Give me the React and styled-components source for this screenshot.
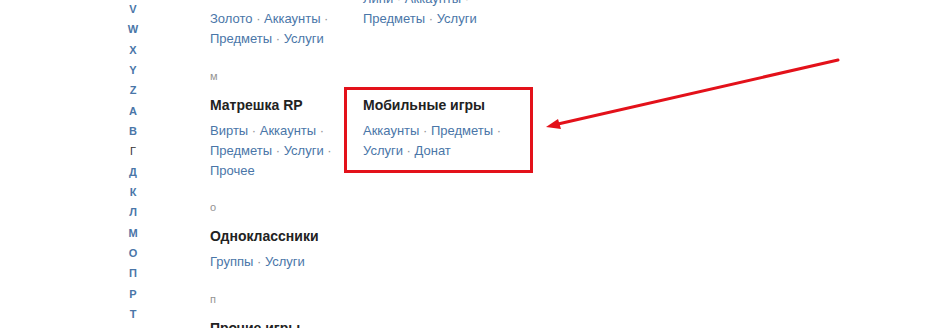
import React from 'react';
import styled, { createGlobalStyle } from 'styled-components';

const GlobalStyle = createGlobalStyle`
    html, body {
        margin: 0;
        padding: 0;
        background: #fff;
        overflow: hidden;
    }
    body {
        font-family: "Liberation Sans", Arial, sans-serif;
        color: #222;
    }
`;

const Page = styled.div`
    position: relative;
    width: 925px;
    height: 328px;
    overflow: hidden;
    display: flex;
    align-items: flex-start;
`;

const Nav = styled.nav`
    width: 24px;
    margin-left: 121px;
    margin-top: -1px;
    display: flex;
    flex-direction: column;
`;

const NavLetter = styled.a`
    display: block;
    text-align: center;
    font-size: 11px;
    line-height: 20.33px;
    font-weight: ${(p) => (p.$active ? 'normal' : 'bold')};
    color: ${(p) => (p.$active ? '#333' : '#4a76a8')};
    text-decoration: none;
`;

const Content = styled.div`
    margin-left: 65px;
    margin-top: -37px;
    display: flex;
    flex-direction: column;
`;

const Section = styled.section`
    padding-bottom: ${(p) => p.$gap}px;
`;

const Letter = styled.div`
    font-size: 11px;
    line-height: 12px;
    color: #939393;
    margin-bottom: 13px;
`;

const Row = styled.div`
    display: grid;
    grid-template-columns: repeat(2, 143px);
    column-gap: 10px;
    align-items: start;
`;

const Card = styled.div`
    position: relative;

    ${(p) =>
        p.$marked &&
        `
        &::after {
            content: '';
            position: absolute;
            top: -8px;
            left: -19px;
            right: -27px;
            bottom: -12px;
            border: 3px solid #e3111a;
            pointer-events: none;
        }
    `}
`;

const Title = styled.div`
    font-size: 14px;
    font-weight: bold;
    line-height: 20px;
    color: #222;
    margin-bottom: 6px;
`;

const Links = styled.div`
    font-size: 13px;
    line-height: 20px;
    color: #939393;
`;

const Link = styled.a`
    color: #4a76a8;
    text-decoration: none;
`;

const Arrow = styled.svg`
    position: absolute;
    top: 0;
    left: 0;
    pointer-events: none;
`;

const navLetters = ['V', 'W', 'X', 'Y', 'Z', 'А', 'В', 'Г', 'Д', 'К', 'Л', 'М', 'О', 'П', 'Р', 'Т'];

const sections = [
    {
        letter: 'л',
        gap: 21,
        cards: [
            { title: 'Lineage 2 Essence Classic', links: ['Золото', 'Аккаунты', 'Предметы', 'Услуги'] },
            { title: 'Legends', links: ['Лини', 'Аккаунты', 'Предметы', 'Услуги'] },
        ],
    },
    {
        letter: 'м',
        gap: 20,
        cards: [
            { title: 'Матрешка RP', links: ['Вирты', 'Аккаунты', 'Предметы', 'Услуги', 'Прочее'] },
            { title: 'Мобильные игры', links: ['Аккаунты', 'Предметы', 'Услуги', 'Донат'], marked: true },
        ],
    },
    {
        letter: 'о',
        gap: 21,
        cards: [{ title: 'Одноклассники', links: ['Группы', 'Услуги'] }],
    },
    {
        letter: 'п',
        gap: 0,
        cards: [{ title: 'Прочие игры', links: ['Аккаунты', 'Предметы'] }],
    },
];

const LinkList = ({ items }) => (
    <Links>
        {items.map((item, i) => (
            <React.Fragment key={item}>
                {i > 0 && '\u00a0· '}
                <Link href="#">{item}</Link>
            </React.Fragment>
        ))}
    </Links>
);

const App = () => {
    return (
        <Page>
            <GlobalStyle />
            <Nav>
                {navLetters.map((l) => (
                    <NavLetter key={l} href="#" $active={l === 'Г'}>
                        {l}
                    </NavLetter>
                ))}
            </Nav>
            <Content>
                {sections.map((s, i) => (
                    <Section key={s.letter} $gap={s.gap}>
                        {i > 0 && <Letter>{s.letter}</Letter>}
                        <Row>
                            {s.cards.map((c) => (
                                <Card key={c.title} $marked={c.marked}>
                                    <Title>{c.title}</Title>
                                    <LinkList items={c.links} />
                                </Card>
                            ))}
                        </Row>
                    </Section>
                ))}
            </Content>
            <Arrow width="925" height="328" viewBox="0 0 925 328">
                <line x1="838" y1="60" x2="558" y2="124" stroke="#e3111a" strokeWidth="3" strokeLinecap="round" />
                <polygon points="546,127 561,129 558,119" fill="#e3111a" />
            </Arrow>
        </Page>
    );
};

export default App;
